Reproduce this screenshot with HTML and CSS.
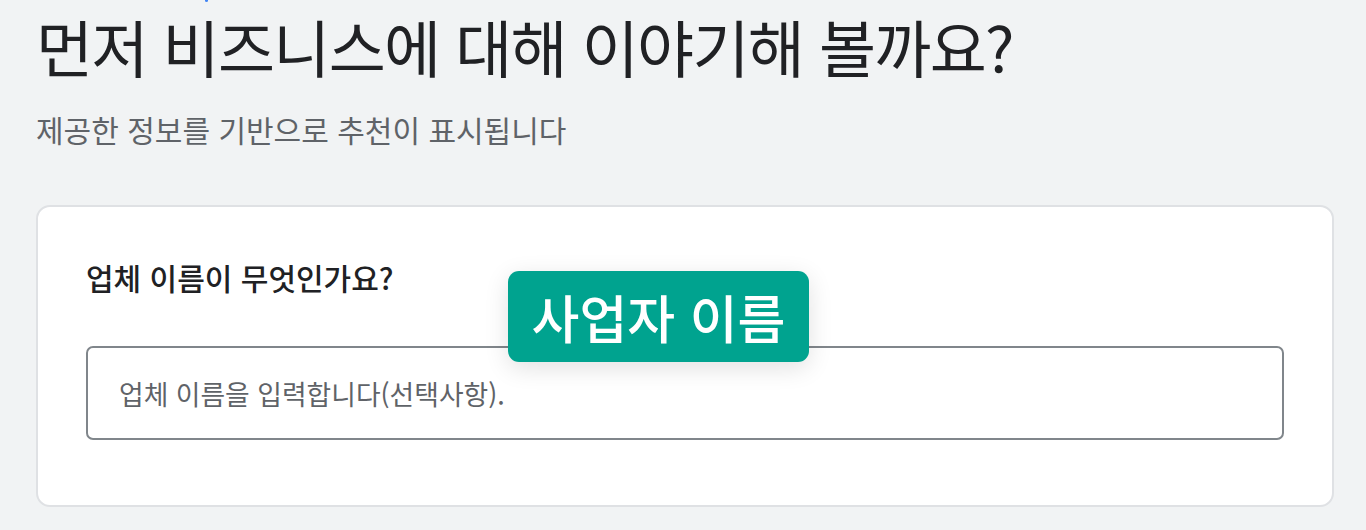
FILE: index.html
```html
<!DOCTYPE html>
<html lang="ko">
<head>
<meta charset="utf-8">
<link rel="stylesheet" href="styles.css">
</head>
<body>
<div class="page">
  <span class="top-dot"></span>
  <h1 class="title">먼저 비즈니스에 대해 이야기해 볼까요?</h1>
  <p class="subtitle">제공한 정보를 기반으로 추천이 표시됩니다</p>
  <section class="card">
    <h2 class="question">업체 이름이 무엇인가요?</h2>
    <div class="field">
      <div class="input">업체 이름을 입력합니다(선택사항).</div>
      <div class="tip">사업자 이름</div>
    </div>
  </section>
</div>
</body>
</html>
```

FILE: styles.css
```css
html, body {
  margin: 0;
  padding: 0;
  background: #f1f3f4;
  font-family: "Noto Sans CJK KR", "Noto Sans", sans-serif;
  color: #202124;
}
.page {
  position: relative;
  padding: 0 32px 0 36px;
  height: 530px;
  box-sizing: border-box;
  overflow: hidden;
}
.top-dot {
  position: absolute;
  left: 205px;
  top: -2px;
  width: 3px;
  height: 4px;
  border-radius: 2px;
  background: #4285f4;
}
.title {
  margin: 0;
  padding-top: 10px;
  font-size: 62px;
  font-weight: 400;
  line-height: 72px;
  letter-spacing: -1.65px;
  color: #202124;
  white-space: nowrap;
}
.subtitle {
  margin: 27px 0 0;
  font-size: 30px;
  line-height: 40px;
  font-weight: 400;
  color: #5f6368;
}
.card {
  margin-top: 56px;
  background: #fff;
  border: 2px solid #dfe1e4;
  border-radius: 14px;
  padding: 50px 48px 65px;
  width: 1298px;
  box-sizing: border-box;
}
.question {
  margin: 0;
  font-size: 30px;
  line-height: 40px;
  font-weight: 500;
  color: #202124;
}
.field {
  position: relative;
  margin-top: 49px;
}
.input {
  border: 2px solid #80868b;
  border-radius: 7px;
  height: 94px;
  box-sizing: border-box;
  padding: 0 31px;
  display: flex;
  align-items: center;
  font-size: 26.8px;
  color: #5f6368;
}
.tip {
  position: absolute;
  left: 422px;
  top: -75px;
  width: 301px;
  height: 91px;
  box-sizing: border-box;
  display: flex;
  align-items: center;
  justify-content: center;
  background: #00a38f;
  color: #fff;
  border-radius: 11px;
  font-size: 52px;
  font-weight: 500;
  box-shadow: 0 6px 24px rgba(0,0,0,0.12);
}
```
